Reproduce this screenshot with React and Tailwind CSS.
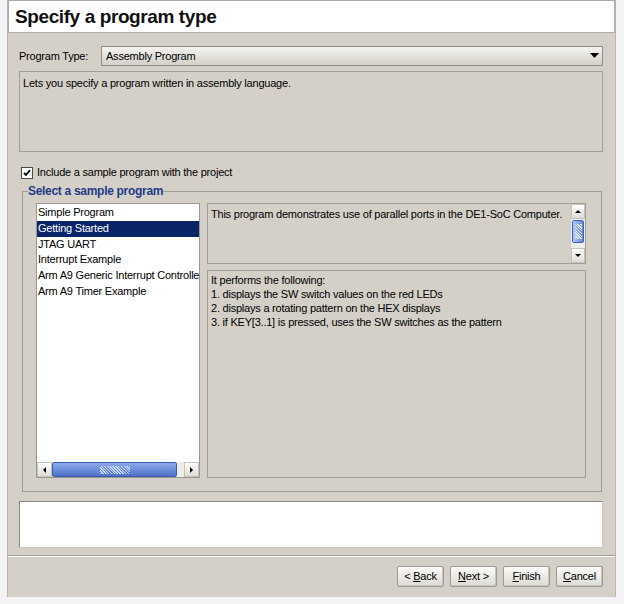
import React from 'react'

const SAMPLES = [
  'Simple Program',
  'Getting Started',
  'JTAG UART',
  'Interrupt Example',
  'Arm A9 Generic Interrupt Controller Example',
  'Arm A9 Timer Example',
]

const DETAILS = [
  'It performs the following:',
  '1. displays the SW switch values on the red LEDs',
  '2. displays a rotating pattern on the HEX displays',
  '3. if KEY[3..1] is pressed, uses the SW switches as the pattern',
]

function Arrow({ dir }) {
  const pts = {
    up: '1,5 4,2 7,5',
    down: '1,2 4,5 7,2',
    left: '5,1 2,4 5,7',
    right: '2,1 5,4 2,7',
  }[dir]
  return (
    <svg width="8" height="8" viewBox="0 0 8 8">
      <polygon points={pts} fill="#000" />
    </svg>
  )
}

function ArrowButton({ dir, className }) {
  return (
    <div className={`flex items-center justify-center bg-linear-to-b from-white to-[#dedcd6] border border-[#c4c2bc] ${className}`}>
      <Arrow dir={dir} />
    </div>
  )
}

function VScrollbar() {
  return (
    <div className="w-[15px] h-full flex flex-col bg-[#eeede8] border-l border-[#d4d0c8]">
      <ArrowButton dir="up" className="h-[15px]" />
      <div className="h-[23px] mx-[1px] mt-[1px] rounded-[2px] border border-[#3f62b8] bg-linear-to-r from-[#b4c8f4] to-[#6688d8] flex items-center justify-center">
        <div className="w-[7px] h-[15px] bg-[repeating-linear-gradient(45deg,#dfe8fc_0_1px,transparent_1px_2px)]" />
      </div>
      <div className="flex-1" />
      <ArrowButton dir="down" className="h-[15px]" />
    </div>
  )
}

function HScrollbar() {
  return (
    <div className="h-[15px] flex bg-[#eeede8]">
      <ArrowButton dir="left" className="w-[15px]" />
      <div className="w-[125px] h-full rounded-[2px] border border-[#3a5ab0] bg-linear-to-b from-[#8eaaec] to-[#4f72c8] flex items-center justify-center">
        <div className="w-[30px] h-[8px] bg-[repeating-linear-gradient(45deg,#c8d6fa_0_1px,transparent_1px_2px)]" />
      </div>
      <div className="flex-1" />
      <ArrowButton dir="right" className="w-[15px]" />
    </div>
  )
}

function WizButton({ children }) {
  return (
    <button className="w-[47px] h-[21px] rounded-[2px] border border-[#9c9a94] bg-linear-to-b from-[#fbfbf9] to-[#dcdad3] text-[11px] text-black shadow-[inset_-1px_-1px_0_#c6c4bc]">
      {children}
    </button>
  )
}

export default function App() {
  return (
    <div className="w-[624px] h-[604px] bg-[#f3f3f6] text-[11px] tracking-[-0.22px] text-black font-['Liberation_Sans',Arial,sans-serif] overflow-hidden">
      <div className="ml-[7px] w-[609px] h-[597px] bg-[#d4d0c8] border-l border-r border-[#bab6ae] flex flex-col">
        {/* Header */}
        <div className="h-[33px] bg-white border border-[#aeaca6] flex items-center px-[6px]">
          <h1 className="text-[19px] tracking-[-0.4px] font-bold text-[#111] leading-none">Specify a program type</h1>
        </div>

        <div className="pl-[11px] pr-[12px] pt-[13px] flex flex-col">
          {/* Program type */}
          <div className="h-[20px] flex items-center">
            <span className="w-[82px]">Program Type:</span>
            <div className="flex-1 h-[20px] border border-[#8e8c86] bg-linear-to-b from-[#f4f3ef] to-[#d2d0c8] flex items-center pl-[4px] pr-[3px]">
              <span className="flex-1">Assembly Program</span>
              <svg width="9" height="6" viewBox="0 0 9 6">
                <polygon points="0,0 9,0 4.5,5" fill="#000" />
              </svg>
            </div>
          </div>

          <div className="mt-[5px] h-[81px] border border-[#a09e98] px-[3px] pt-[3px]">
            Lets you specify a program written in assembly language.
          </div>

          {/* Checkbox */}
          <div className="mt-[14px] h-[13px] flex items-center gap-[4px] pl-[2px]">
            <div className="w-[12px] h-[12px] bg-white border border-[#4a4a4a] flex items-center justify-center">
              <svg width="8" height="8" viewBox="0 0 8 8">
                <polyline points="1,4 3,6 7,1" fill="none" stroke="#000" strokeWidth="1.8" />
              </svg>
            </div>
            <span>Include a sample program with the project</span>
          </div>

          {/* Group */}
          <fieldset className="mt-[5px] ml-[3px] mr-[1px] border border-[#a09e98]">
            <legend className="ml-[5px] text-[12px] tracking-[-0.3px] font-bold text-[#1f3c88] leading-[15px]">Select a sample program</legend>
            <div className="flex gap-[7px] pl-[13px] pr-[15px] pt-[4px] pb-[13px]">
              {/* List */}
              <div className="w-[164px] h-[275px] bg-white border border-[#9a9892] flex flex-col overflow-hidden">
                <div className="flex-1 pt-[1px]">
                  {SAMPLES.map((s) => (
                    <div
                      key={s}
                      className={`h-[15.8px] leading-[15.8px] pl-[1px] whitespace-nowrap overflow-hidden ${
                        s === 'Getting Started' ? 'bg-[#0a246a] text-white' : ''
                      }`}
                    >
                      {s}
                    </div>
                  ))}
                </div>
                <HScrollbar />
              </div>

              {/* Details */}
              <div className="w-[379px] flex flex-col gap-[6px]">
                <div className="h-[61px] border border-[#a09e98] flex">
                  <div className="flex-1 px-[3px] pt-[2px] whitespace-nowrap">
                    This program demonstrates use of parallel ports in the DE1-SoC Computer.
                  </div>
                  <VScrollbar />
                </div>
                <div className="flex-1 border border-[#a09e98] px-[3px] pt-[2px] leading-[14px]">
                  {DETAILS.map((d) => (
                    <div key={d}>{d}</div>
                  ))}
                </div>
              </div>
            </div>
          </fieldset>

          {/* Message area */}
          <div className="mt-[9px] h-[47px] bg-white border border-[#8a8882] border-b-[#c8c6c0] border-r-[#c8c6c0]" />
        </div>

        {/* Separator */}
        <div className="mt-[7px] border-t border-[#a09e98] border-b border-b-white" />

        {/* Buttons */}
        <div className="mt-[9px] flex justify-end gap-[6px] pr-[12px]">
          <WizButton>&lt; <u>B</u>ack</WizButton>
          <WizButton><u>N</u>ext &gt;</WizButton>
          <WizButton><u>F</u>inish</WizButton>
          <WizButton><u>C</u>ancel</WizButton>
        </div>
      </div>
    </div>
  )
}
